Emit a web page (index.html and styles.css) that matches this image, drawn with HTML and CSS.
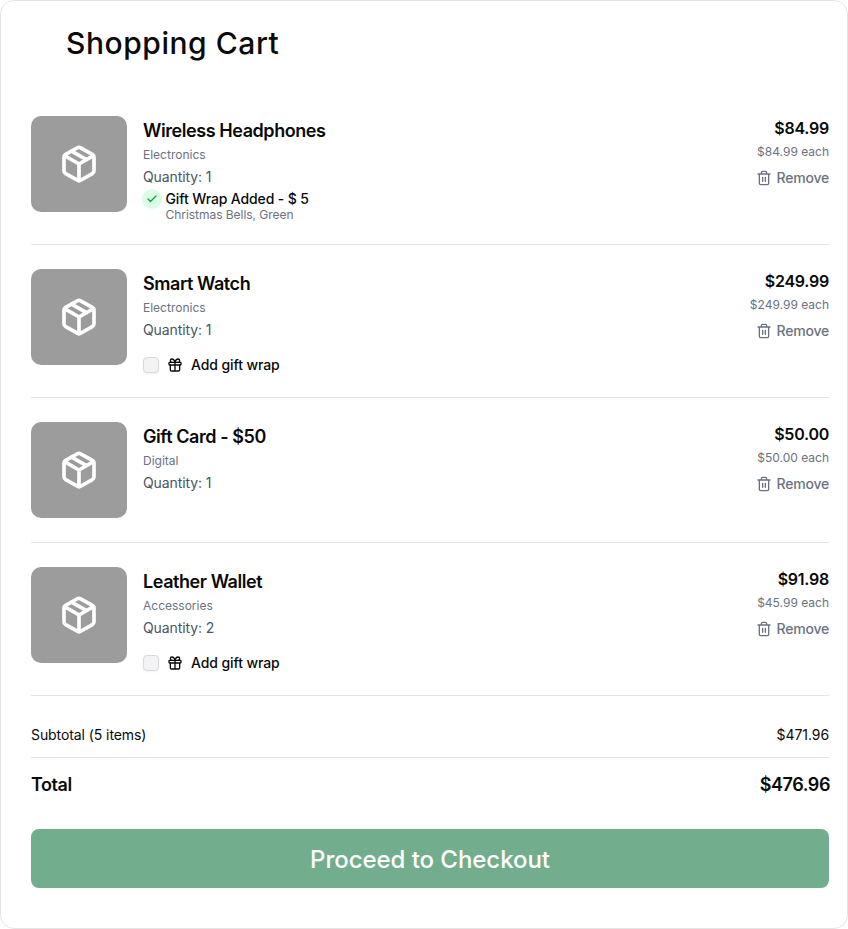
FILE: index.html
```html
<!DOCTYPE html>
<html lang="en">
<head>
  <meta charset="UTF-8">
  <title>Shopping Cart</title>
  <link rel="stylesheet" href="styles.css">
</head>
<body>
  <!-- shared icons -->
  <svg class="sprite">
    <symbol id="icon-package" viewBox="0 0 24 24">
      <path d="M21 8a2 2 0 0 0-1-1.73l-7-4a2 2 0 0 0-2 0l-7 4A2 2 0 0 0 3 8v8a2 2 0 0 0 1 1.73l7 4a2 2 0 0 0 2 0l7-4A2 2 0 0 0 21 16Z"/>
      <path d="m3.3 7 8.7 5 8.7-5M12 22V12M7.5 4.27l9 5.15"/>
    </symbol>
    <symbol id="icon-trash" viewBox="0 0 24 24">
      <path d="M3 6h18M19 6v14a2 2 0 0 1-2 2H7a2 2 0 0 1-2-2V6M8 6V4a2 2 0 0 1 2-2h4a2 2 0 0 1 2 2v2M10 11v6M14 11v6"/>
    </symbol>
    <symbol id="icon-gift" viewBox="0 0 24 24">
      <rect x="3" y="8" width="18" height="4" rx="1"/>
      <path d="M12 8v13M19 12v7a2 2 0 0 1-2 2H7a2 2 0 0 1-2-2v-7"/>
      <path d="M7.5 8a2.5 2.5 0 0 1 0-5A4.8 8 0 0 1 12 8a4.8 8 0 0 1 4.5-5 2.5 2.5 0 0 1 0 5"/>
    </symbol>
    <symbol id="icon-check" viewBox="0 0 24 24">
      <path d="M20 6 9 17l-5-5"/>
    </symbol>
  </svg>

  <main class="cart">
    <h1>Shopping Cart</h1>

    <ul class="items">
      <li class="item">
        <div class="thumb"><svg class="icon"><use href="#icon-package"/></svg></div>
        <div class="details">
          <h2>Wireless Headphones</h2>
          <p class="category">Electronics</p>
          <p class="quantity">Quantity: 1</p>
          <div class="gift-added">
            <span class="check"><svg class="icon"><use href="#icon-check"/></svg></span>
            <div>
              <p class="gift-title">Gift Wrap Added - $ 5</p>
              <p class="gift-style">Christmas Bells, Green</p>
            </div>
          </div>
        </div>
        <div class="pricing">
          <p class="price">$84.99</p>
          <p class="each">$84.99 each</p>
          <button class="remove"><svg class="icon"><use href="#icon-trash"/></svg>Remove</button>
        </div>
      </li>

      <li class="item">
        <div class="thumb"><svg class="icon"><use href="#icon-package"/></svg></div>
        <div class="details">
          <h2>Smart Watch</h2>
          <p class="category">Electronics</p>
          <p class="quantity">Quantity: 1</p>
          <label class="gift-wrap">
            <input type="checkbox">
            <svg class="icon"><use href="#icon-gift"/></svg>
            Add gift wrap
          </label>
        </div>
        <div class="pricing">
          <p class="price">$249.99</p>
          <p class="each">$249.99 each</p>
          <button class="remove"><svg class="icon"><use href="#icon-trash"/></svg>Remove</button>
        </div>
      </li>

      <li class="item">
        <div class="thumb"><svg class="icon"><use href="#icon-package"/></svg></div>
        <div class="details">
          <h2>Gift Card - $50</h2>
          <p class="category">Digital</p>
          <p class="quantity">Quantity: 1</p>
        </div>
        <div class="pricing">
          <p class="price">$50.00</p>
          <p class="each">$50.00 each</p>
          <button class="remove"><svg class="icon"><use href="#icon-trash"/></svg>Remove</button>
        </div>
      </li>

      <li class="item">
        <div class="thumb"><svg class="icon"><use href="#icon-package"/></svg></div>
        <div class="details">
          <h2>Leather Wallet</h2>
          <p class="category">Accessories</p>
          <p class="quantity">Quantity: 2</p>
          <label class="gift-wrap">
            <input type="checkbox">
            <svg class="icon"><use href="#icon-gift"/></svg>
            Add gift wrap
          </label>
        </div>
        <div class="pricing">
          <p class="price">$91.98</p>
          <p class="each">$45.99 each</p>
          <button class="remove"><svg class="icon"><use href="#icon-trash"/></svg>Remove</button>
        </div>
      </li>
    </ul>

    <div class="subtotal"><span>Subtotal (5 items)</span><span>$471.96</span></div>
    <div class="total"><span>Total</span><span>$476.96</span></div>
    <button class="checkout">Proceed to Checkout</button>
  </main>
</body>
</html>
```
FILE: styles.css
```css
* {
  box-sizing: border-box;
}

body {
  margin: 0;
  font-family: Inter, "Liberation Sans", sans-serif;
  background: #fff;
  color: #0a0a0a;
}

h1, h2, p, ul {
  margin: 0;
  padding: 0;
}

button {
  font-family: inherit;
  border: none;
  cursor: pointer;
}

.sprite {
  display: none;
}

.icon {
  display: block;
  flex-shrink: 0;
  width: 16px;
  height: 16px;
  fill: none;
  stroke: currentColor;
  stroke-width: 2;
  stroke-linecap: round;
  stroke-linejoin: round;
}

.cart {
  height: 929px;
  padding: 22px 18px 0 30px;
  border: 1px solid #e5e5e5;
  border-radius: 14px;
}

h1 {
  padding-left: 35px;
  font-size: 30px;
  font-weight: 450;
  line-height: 40px;
  letter-spacing: 0.55px;
  margin-bottom: 29px;
}

.items {
  list-style: none;
}

.item {
  display: flex;
  gap: 16px;
  padding: 24px 0;
  border-bottom: 1px solid #e5e5e5;
}

.thumb {
  display: flex;
  align-items: center;
  justify-content: center;
  width: 96px;
  height: 96px;
  border-radius: 10px;
  background: #9c9c9c;
  color: #fff;
}

.thumb .icon {
  width: 40px;
  height: 40px;
  stroke-width: 2.2;
}

.details {
  flex: 1;
}

h2 {
  padding-top: 1px;
  font-size: 18px;
  font-weight: 600;
  line-height: 28px;
  letter-spacing: -0.43px;
}

.category,
.each,
.gift-style {
  font-size: 12px;
  line-height: 16px;
  color: #6a7282;
}

.category {
  margin-top: 2px;
}

.quantity {
  margin-top: 4px;
  font-size: 14px;
  line-height: 20px;
  letter-spacing: -0.1px;
  color: #4a5565;
}

.gift-added {
  display: flex;
  gap: 4px;
  margin: 3px 0 -2px -1.5px;
}

.gift-title {
  font-size: 14px;
  font-weight: 500;
  line-height: 17px;
  letter-spacing: -0.12px;
}

.gift-added .gift-style {
  line-height: 15px;
  letter-spacing: -0.04px;
}

.check {
  display: flex;
  align-items: center;
  justify-content: center;
  width: 20px;
  height: 20px;
  border-radius: 50%;
  background: #dcfce7;
  color: #00a63e;
  margin-top: -1px;
}

.check .icon {
  width: 12px;
  height: 12px;
  stroke-width: 2.5;
}

.gift-wrap {
  display: flex;
  align-items: center;
  gap: 8px;
  margin-top: 17px;
  font-size: 14px;
  font-weight: 500;
  line-height: 16px;
  letter-spacing: -0.1px;
}

.gift-wrap input {
  appearance: none;
  width: 16px;
  height: 16px;
  margin: 0;
  border: 1px solid #d9d9dc;
  border-radius: 4px;
  background: #f3f3f5;
  box-shadow: 0 1px 2px rgba(0, 0, 0, 0.05);
}

.pricing {
  display: flex;
  flex-direction: column;
  align-items: flex-end;
}

.price {
  font-size: 16px;
  font-weight: 600;
  line-height: 24px;
  letter-spacing: -0.25px;
}

.each {
  margin-top: 4px;
}

.remove {
  display: flex;
  align-items: center;
  gap: 4px;
  margin-top: 8px;
  padding: 0;
  background: none;
  color: #6a7282;
  font-size: 14px;
  font-weight: 500;
  line-height: 20px;
  letter-spacing: -0.2px;
}

.subtotal,
.total {
  display: flex;
  justify-content: space-between;
}

.subtotal {
  padding: 29px 0 12px;
  border-bottom: 1px solid #e5e5e5;
  font-size: 14px;
  line-height: 20px;
  letter-spacing: -0.08px;
}

.total {
  margin-right: -1px;
  padding: 13px 0 0;
  font-size: 18px;
  font-weight: 600;
  line-height: 28px;
  letter-spacing: -0.44px;
}

.checkout {
  display: block;
  width: 100%;
  height: 59px;
  margin-top: 30px;
  padding-top: 2px;
  border-radius: 8px;
  background: #72ad8e;
  color: #fff;
  font-size: 24px;
  font-weight: 450;
  letter-spacing: -0.05px;
}
```
